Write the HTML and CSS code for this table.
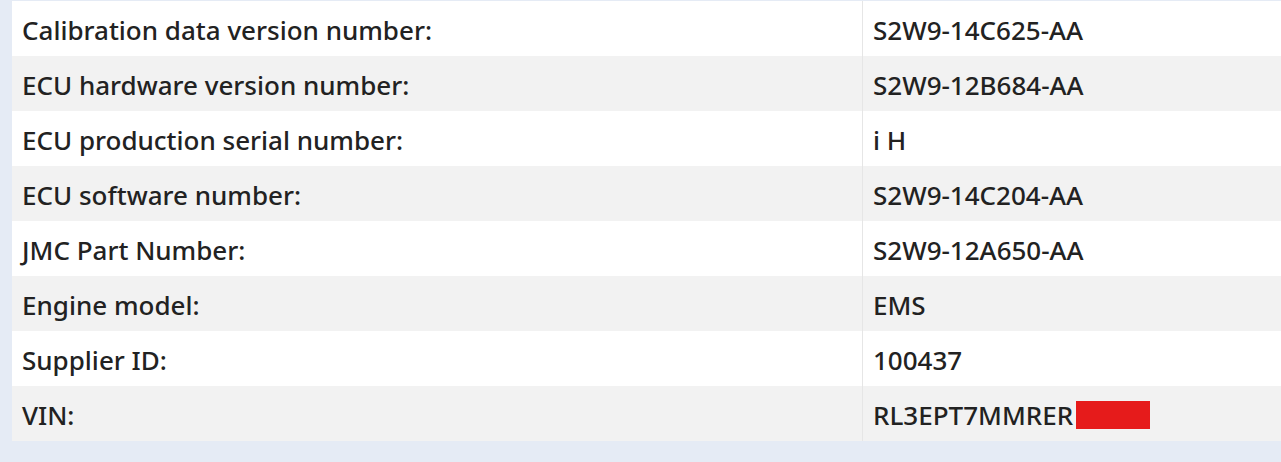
FILE: index.html
```html
<!DOCTYPE html>
<html>
<head>
<meta charset="utf-8">
<link rel="stylesheet" href="styles.css">
</head>
<body>
<div class="page">
  <div class="table">
    <div class="row"><div class="cell key">Calibration data version number:</div><div class="cell val">S2W9-14C625-AA</div></div>
    <div class="row alt"><div class="cell key">ECU hardware version number:</div><div class="cell val">S2W9-12B684-AA</div></div>
    <div class="row"><div class="cell key">ECU production serial number:</div><div class="cell val">i H</div></div>
    <div class="row alt"><div class="cell key">ECU software number:</div><div class="cell val">S2W9-14C204-AA</div></div>
    <div class="row"><div class="cell key">JMC Part Number:</div><div class="cell val">S2W9-12A650-AA</div></div>
    <div class="row alt"><div class="cell key">Engine model:</div><div class="cell val">EMS</div></div>
    <div class="row"><div class="cell key">Supplier ID:</div><div class="cell val">100437</div></div>
    <div class="row alt"><div class="cell key">VIN:</div><div class="cell val">RL3EPT7MMRER<span class="redact"></span></div></div>
  </div>
</div>
</body>
</html>
```
FILE: styles.css
```css
html, body {
  margin: 0;
  padding: 0;
  background: #e5ebf5;
}
.page {
  padding: 1px 0 0 12px;
  height: 461px;
  overflow: hidden;
}
.table {
  width: 1290px;
  display: flex;
  flex-direction: column;
  font-family: "Noto Sans", sans-serif;
  font-size: 26px;
  font-weight: 500;
  color: #222;
}
.row {
  display: grid;
  grid-template-columns: 850px 1fr;
  height: 55px;
  background: #ffffff;
}
.row.alt {
  background: #f2f2f2;
}
.cell {
  display: flex;
  align-items: center;
  padding-left: 10px;
  padding-top: 2px;
}
.val {
  border-left: 1px solid #e6e6e6;
}
.redact {
  display: inline-block;
  width: 74px;
  height: 28px;
  background: #e61b1b;
  margin-left: 3px;
}
```
